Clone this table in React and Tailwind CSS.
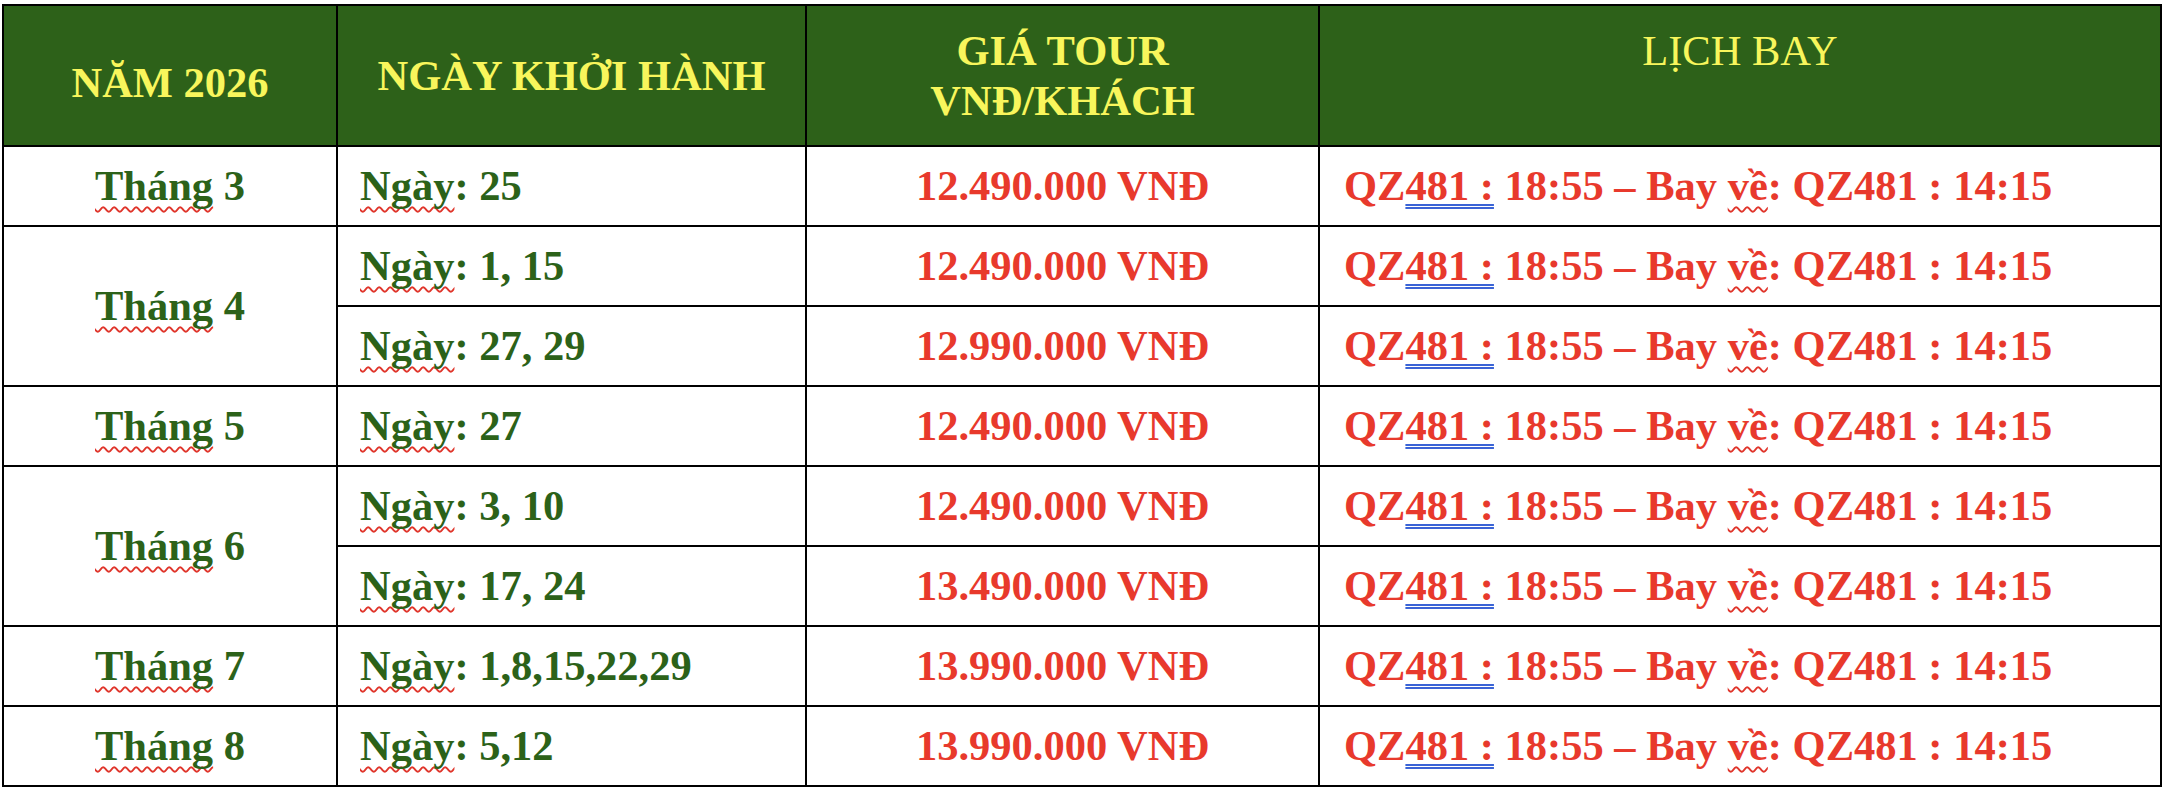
const rows = [
  { thang: 'Tháng 3', span: 1, ngay: '25', gia: '12.490.000 VNĐ' },
  { thang: 'Tháng 4', span: 2, ngay: '1, 15', gia: '12.490.000 VNĐ' },
  { thang: null, ngay: '27, 29', gia: '12.990.000 VNĐ' },
  { thang: 'Tháng 5', span: 1, ngay: '27', gia: '12.490.000 VNĐ' },
  { thang: 'Tháng 6', span: 2, ngay: '3, 10', gia: '12.490.000 VNĐ' },
  { thang: null, ngay: '17, 24', gia: '13.490.000 VNĐ' },
  { thang: 'Tháng 7', span: 1, ngay: '1,8,15,22,29', gia: '13.990.000 VNĐ' },
  { thang: 'Tháng 8', span: 1, ngay: '5,12', gia: '13.990.000 VNĐ' },
];

const wavy =
  'underline decoration-wavy decoration-[#e0352b] decoration-2 underline-offset-[6px] [text-decoration-skip-ink:none]';
const dbl =
  'underline decoration-double decoration-[#3a63d6] decoration-2 underline-offset-[4px] [text-decoration-skip-ink:none]';

const App = () => {
  return (
    <div className="bg-white pt-[4px] pl-[2px] w-[2162px] h-[790px] font-['Liberation_Serif',serif]">
      <table className="table-fixed border-collapse w-[2158px] border-2 border-black text-[42.5px] leading-[50px]">
        <colgroup>
          <col className="w-[334px]" />
          <col className="w-[469px]" />
          <col className="w-[513px]" />
          <col className="w-[842px]" />
        </colgroup>
        <thead>
          <tr className="h-[141px] bg-[#2d6119] text-[#f8f65c]">
            <th className="border-2 border-black font-bold pt-[14px]">NĂM 2026</th>
            <th className="border-2 border-black font-bold">NGÀY KHỞI HÀNH</th>
            <th className="border-2 border-black font-bold">
              GIÁ TOUR
              <br />
              VNĐ/KHÁCH
            </th>
            <th className="border-2 border-black font-normal align-top pt-[20px]">LỊCH BAY</th>
          </tr>
        </thead>
        <tbody className="font-bold">
          {rows.map((r, i) => (
            <tr key={i} className="h-[80px]">
              {r.thang && (
                <td rowSpan={r.span} className="border-2 border-black text-center text-[#2c6219]">
                  <span className={wavy}>{r.thang.split(' ')[0]}</span> {r.thang.split(' ')[1]}
                </td>
              )}
              <td className="border-2 border-black pl-[22px] text-[#2c6219]">
                <span className={wavy}>Ngày</span>: {r.ngay}
              </td>
              <td className="border-2 border-black text-center text-[#e8392c]">{r.gia}</td>
              <td className="border-2 border-black pl-[24px] text-[#e8392c] whitespace-nowrap">
                QZ<span className={dbl}>481 :</span> 18:55 – Bay <span className={wavy}>về</span>: QZ481 : 14:15
              </td>
            </tr>
          ))}
        </tbody>
      </table>
    </div>
  );
};

export default App;
